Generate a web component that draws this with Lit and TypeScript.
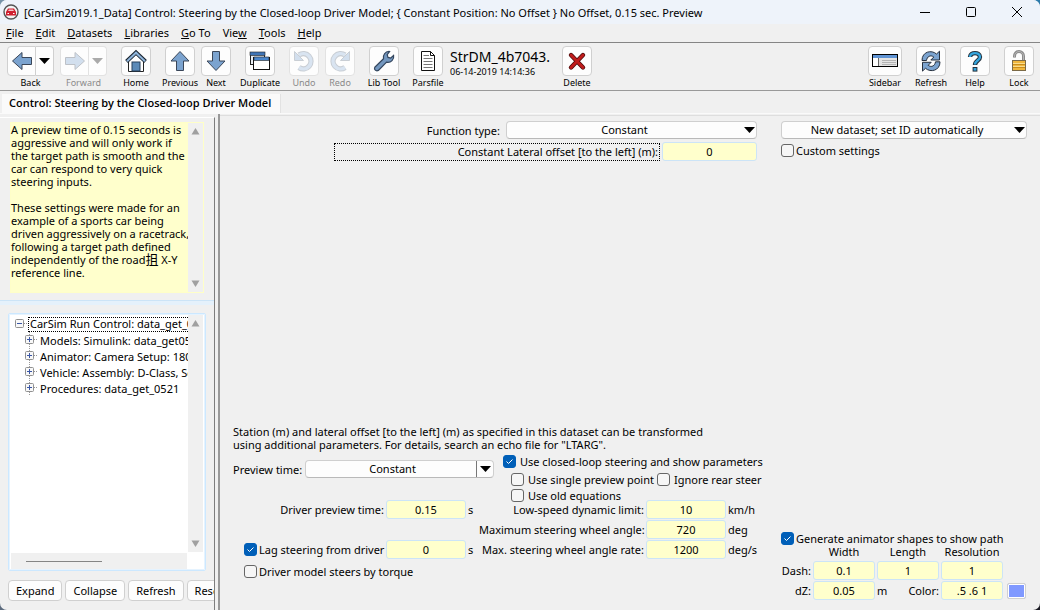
import { LitElement, html, css, svg, nothing } from "lit";
import { customElement, property } from "lit/decorators.js";

const STEEL = "#7ba3cf";
const EDGE = "#3a4658";

const icons: Record<string, unknown> = {
  back: svg`<path d="M2.5 12 L12 3.5 V8.5 H21.5 V15.5 H12 V20.5 Z" fill=${STEEL} stroke=${EDGE}/>`,
  forward: svg`<path d="M21.5 12 L12 3.5 V8.5 H2.5 V15.5 H12 V20.5 Z" fill=${STEEL} stroke=${EDGE}/>`,
  prev: svg`<path d="M12 2.5 L21 12 H15.5 V21.5 H8.5 V12 H3 Z" fill=${STEEL} stroke=${EDGE}/>`,
  next: svg`<path d="M12 21.5 L21 12 H15.5 V2.5 H8.5 V12 H3 Z" fill=${STEEL} stroke=${EDGE}/>`,
  home: svg`<path d="M4.5 12 V22.5 H19.5 V12 L12 5 Z" fill="#fff" stroke="#222"/>
    <rect x="8" y="13" width="8" height="9" fill="#5b8ab8" stroke="#27405c"/>
    <path d="M2.5 12.5 L12 3.5 L21.5 12.5" fill="none" stroke="#1c2733" stroke-width="4"/>
    <path d="M3 12.2 L12 3.7 L21 12.2" fill="none" stroke="#8fb4da" stroke-width="2"/>`,
  dup: svg`<rect x="2.5" y="3.5" width="14" height="12" fill="#e9eef4" stroke="#222"/>
    <rect x="2" y="3" width="15" height="3.5" fill="#3f74b5" stroke="#222" stroke-width=".6"/>
    <rect x="5.5" y="8.5" width="16" height="12" fill="#fff" stroke="#111"/>
    <rect x="6" y="8" width="15" height="3.5" fill="#4a86cc" stroke="#222" stroke-width=".6"/>`,
  undo: svg`<path d="M7 6 A7.6 7.6 0 1 1 7 18.5" fill="none" stroke="#5d6d80" stroke-width="5.4"/>
    <path d="M2.5 2.5 V11.5 H11.5 Z" fill=${STEEL} stroke="#5d6d80"/>
    <path d="M7 6 A7.6 7.6 0 1 1 7 18.5" fill="none" stroke="#8fb2d8" stroke-width="3.4"/>`,
  redo: svg`<path d="M17 6 A7.6 7.6 0 1 0 17 18.5" fill="none" stroke="#5d6d80" stroke-width="5.4"/>
    <path d="M21.5 2.5 V11.5 H12.5 Z" fill=${STEEL} stroke="#5d6d80"/>
    <path d="M17 6 A7.6 7.6 0 1 0 17 18.5" fill="none" stroke="#8fb2d8" stroke-width="3.4"/>`,
  wrench: svg`<path d="M2.8 18.2 L11.5 9.8 C10.7 6 13.2 2.6 17 2.4 L17.6 2.6 L15.2 5.6 L16 8.4 L18.8 9 L21.6 6.4 C22.4 10.4 19 14 14.6 13.2 L6.4 21.4 C4 22.6 1.6 20.6 2.8 18.2 Z" fill="#7397bf" stroke="#34465e" stroke-width="1.2"/>`,
  page: svg`<path d="M5.5 2.5 H14.5 L18.5 6.5 V21.5 H5.5 Z" fill="#fff" stroke="#111"/>
    <path d="M14.5 2.5 V6.5 H18.5" fill="none" stroke="#111"/>
    <path d="M7.5 6.5 H13 M7.5 9.5 H16.5 M7.5 12.5 H16.5 M7.5 15.5 H16.5 M7.5 18.5 H16.5" stroke="#777"/>`,
  del: svg`<path d="M6 6 L18 18.5 M18 6 L6 18.5" stroke="#4d0b0b" stroke-width="4.4" stroke-linecap="round"/>
    <path d="M6 6 L18 18.5 M18 6 L6 18.5" stroke="#c01c1c" stroke-width="2.8" stroke-linecap="round"/>`,
  sidebar: svg`<rect x="0" y="6" width="26" height="12" fill="#e4e4e4"/>
    <rect x="0" y="6" width="26" height="3" fill="#5f93d3"/>
    <rect x="0" y="9" width="6" height="9" fill="#fff"/>
    <path d="M6.5 9 V18" stroke="#666"/><path d="M10 11.5 H24 M10 13.5 H24 M10 15.5 H24" stroke="#b4b4b4"/>
    <rect x=".5" y="5.5" width="25" height="12" fill="none" stroke="#000"/>`,
  refresh: svg`<path d="M3 11.5 C3 2.5 12.5 .5 17.5 5 L20.5 2.2 V11 H11.8 L14.8 8 C11.5 5.5 8 7.5 7.5 11.5 Z" fill=${STEEL} stroke="#27313f"/>
    <path d="M21 12.8 C21 21.8 11.5 23.8 6.5 19.3 L3.5 22.1 V13.3 H12.2 L9.2 16.3 C12.5 18.8 16 16.8 16.5 12.8 Z" fill=${STEEL} stroke="#27313f"/>`,
  help: svg`<path d="M7 8 C7 2.8 17 2.8 17 8 C17 11.5 12 11.5 12 16" fill="none" stroke="#24313d" stroke-width="4.4"/>
    <rect x="9.6" y="18" width="4.8" height="4.6" fill="#24313d"/>
    <path d="M7 8 C7 2.8 17 2.8 17 8 C17 11.5 12 11.5 12 15.5" fill="none" stroke="#35a7e0" stroke-width="2.4"/>
    <rect x="10.6" y="19" width="2.8" height="2.6" fill="#35a7e0"/>`,
  lock: svg`<path d="M7.5 8.5 V7 A4.5 4.5 0 0 1 16.5 7 V12" fill="none" stroke="#8a8a8a" stroke-width="3"/>
    <path d="M7.5 8.5 V7 A4.5 4.5 0 0 1 16.5 7 V12" fill="none" stroke="#b5b5b5" stroke-width="1"/>
    <rect x="5.5" y="11.5" width="13" height="10" fill="#f0b63c" stroke="#7b6a48"/>
    <path d="M6 14.5 H18 M6 17.5 H18" stroke="#f9dc8c"/><path d="M6 15.5 H18 M6 18.5 H18" stroke="#c98d1c"/>`,
};

const icon = (name: string, w = 24) =>
  html`<svg width=${w} height="24" viewBox="0 0 ${w} 24" aria-hidden="true">${icons[name]}</svg>`;

const caret = html`<svg class="caret" width="11" height="6" viewBox="0 0 11 6" aria-hidden="true"><path d="M0 0 H11 L5.5 6 Z" fill="currentColor"/></svg>`;

const controls = css`
  * { box-sizing: border-box; }
  button, input, select { font: inherit; color: inherit; margin: 0; }
  button {
    background: #fdfdfd; border: 1px solid #d0d0d0; border-radius: 4px; padding: 0;
    display: flex; align-items: center; justify-content: center;
  }
  svg { display: block; flex: none; }
`;

@customElement("tool-button")
class ToolButton extends LitElement {
  @property() icon = "";
  @property() label = "";
  @property({ type: Boolean }) off = false;
  @property({ type: Boolean }) menu = false;
  @property({ type: Boolean }) wide = false;
  static styles = [controls, css`
    :host { display: block; }
    .tool { display: flex; flex-direction: column; align-items: center; width: 30px; }
    .tool.menu { width: 47px; }
    .tool.wide { width: 34px; }
    .keys { display: flex; width: 100%; height: 30px; }
    .key { flex: 1; }
    .menu .key { border-radius: 4px 0 0 4px; }
    .more { width: 18px; border-left: 0; border-radius: 0 4px 4px 0; }
    .label { font-size: 9px; line-height: 14px; white-space: nowrap; }
    .off .label { color: #8a8a8a; }
    .off svg { opacity: .32; }
    .off button { border-color: #e2e2e2; }
  `];
  render() {
    return html`<div class="tool ${this.menu ? "menu" : ""} ${this.wide ? "wide" : ""} ${this.off ? "off" : ""}">
      <div class="keys">
        <button class="key" aria-label=${this.label} ?disabled=${this.off}>${icon(this.icon, this.wide ? 26 : 24)}</button>
        ${this.menu ? html`<button class="more" aria-label="${this.label} history" ?disabled=${this.off}>${caret}</button>` : nothing}
      </div>
      <span class="label">${this.label}</span>
    </div>`;
  }
}

@customElement("drop-down")
class DropDown extends LitElement {
  @property() value = "";
  @property() label = "";
  @property({ type: Boolean }) split = false;
  static styles = [controls, css`
    :host { display: block; position: relative; }
    select {
      appearance: none; display: block; width: 100%; height: 18px; padding: 0 17px 0 3px;
      border: 1px solid #cfcfcf; border-bottom-color: #b9b9b9; border-radius: 4px;
      background: #fdfdfd; text-align: center; text-align-last: center; line-height: 16px;
    }
    .arrow {
      position: absolute; inset: 1px 1px 1px auto; width: 13px; pointer-events: none;
      display: flex; align-items: center; justify-content: center;
    }
    .arrow.split { width: 17px; border-left: 1px solid #777; }
  `];
  render() {
    return html`<select aria-label=${this.label}><option>${this.value}</option></select>
      <span class="arrow ${this.split ? "split" : ""}">${caret}</span>`;
  }
}

@customElement("tick-box")
class TickBox extends LitElement {
  @property() label = "";
  @property({ type: Boolean }) on = false;
  @property({ type: Boolean }) near = false;
  static styles = [controls, css`
    :host { display: block; }
    label { display: flex; align-items: center; gap: 4px; height: 16px; white-space: nowrap; }
    label.near { gap: 2px; }
    input {
      appearance: none; width: 13px; height: 13px; flex: none;
      border: 1px solid #666; border-radius: 3px; background: #f6f6f6;
    }
    input:checked {
      border-color: #005fb8;
      background: #005fb8 url('data:image/svg+xml,<svg xmlns="http://www.w3.org/2000/svg" viewBox="0 0 11 11"><path d="M2.5 5.5 L4.5 7.5 L8.5 3.5" fill="none" stroke="white"/></svg>');
    }
  `];
  render() {
    return html`<label class=${this.near ? "near" : ""}><input type="checkbox" .checked=${this.on}>${this.label}</label>`;
  }
}

@customElement("app-root")
class AppRoot extends LitElement {
  static styles = [controls, css`
    :host {
      display: block; height: 100vh; overflow: hidden; color: #000;
      font: 11px/13px "Noto Sans", "Open Sans", "Noto Sans CJK SC", sans-serif;
      background: linear-gradient(to right, #7793a8 50%, #2d7bab 50%) top / 100% 50% no-repeat,
        linear-gradient(to right, #5c6b7e 50%, #1a1a22 50%);
    }
    .window {
      display: flex; flex-direction: column; height: 100%; background: #f0f0f0;
      border-radius: 7px; overflow: hidden;
    }
    .title { display: flex; align-items: center; height: 24px; flex: none; padding-left: 3px; background: #eef3fa; }
    .title h1 { flex: 1; margin: 0 0 0 5px; font-size: 11px; font-weight: 400; white-space: nowrap; }
    .title button { width: 46px; height: 24px; background: none; border: 0; }
    .menus { display: flex; gap: 12px; height: 18px; flex: none; padding-left: 6px; line-height: 17px; }
    .menus a { color: inherit; text-decoration: none; }
    .tools {
      display: flex; gap: 14px; height: 49px; flex: none; padding: 3px 6px 0 7px;
      border-top: 1px solid #858585; border-bottom: 1px solid #999;
    }
    .pair { display: flex; gap: 6px; }
    .file { width: 98px; margin-left: -7px; padding-top: 3px; white-space: nowrap; flex: none; }
    .file strong { display: block; font-size: 14px; font-weight: 400; line-height: 16px; }
    .file small { display: block; font-size: 9px; line-height: 14px; }
    .push { flex: 1; }
    .tabs { display: flex; height: 23px; flex: none; padding: 3px 0 0 2px; border-bottom: 1px solid #fafafa; }
    .tab { padding: 0 9px 0 7px; background: #fafafa; border-right: 1px solid #e2e2e2; font-family: "Open Sans", "Noto Sans", sans-serif; font-weight: 600; line-height: 18px; }
    .body { display: flex; flex: 1; min-height: 0; }

    .side { display: flex; flex-direction: column; width: 215px; flex: none; margin-top: 3px; border-top: 1px solid #fff; border-right: 1px solid #7d7d7d; overflow: hidden; }
    .split { width: 5px; flex: none; border-right: 2px solid #999; }
    .note { display: flex; height: 171px; flex: none; margin: 4px 10px 7px; border: 1px solid #ffffc8; background: #ffffcc; }
    .note-text { flex: 1; min-width: 0; white-space: nowrap; }
    .note-text p { margin: 0 0 13px; }
    .han { font-size: 13px; line-height: 1; }
    .rail { display: flex; flex-direction: column; justify-content: space-between; align-items: center; width: 15px; flex: none; padding: 5px 0; background: #f0f0f0; color: #a0a0a0; }
    .band { height: 5px; flex: none; background: #e5f1fb; border-top: 1px solid #cce4f7; }
    .tree { display: flex; flex-direction: column; flex: 1; margin: 8px 8px 9px; border: 1px solid #cce8ff; outline: 1px solid #e5f3ff; outline-offset: -2px; background: #fff; border-radius: 2px; }
    .tree-main { display: flex; flex: 1; min-height: 0; padding: 1px 2px 1px 1px; }
    .nodes { flex: 1; min-width: 0; margin: 0; padding: 1px 0 0 5px; list-style: none; overflow: hidden; white-space: nowrap; }
    .nodes ul { margin: 0; padding: 0 0 0 10px; list-style: none; }
    .node { display: flex; align-items: center; height: 16px; }
    .root { height: 15px; padding: 0 1px; margin-left: 1px; border: 1px dotted #000; line-height: 12px; }
    .leaf { margin-left: 3px; }
    .tree-foot { height: 16px; flex: none; margin: 0 18px 1px 2px; padding: 8px 0 0 15px; background: #f0f0f0; }
    .thumb { width: 76px; height: 1px; background: #858585; }
    .actions { display: flex; gap: 3px; flex: none; padding: 0 0 9px 8px; }
    .actions button { height: 21px; flex: none; padding: 0 7px; }

    .main { display: flex; flex: 1; min-width: 0; margin-top: 1px; border-top: 1px solid #dedede; padding: 5px 13px 9px 13px; gap: 24px; }
    .left { display: flex; flex-direction: column; flex: 1; min-width: 0; justify-content: space-between; padding-bottom: 22px; }
    .right { display: flex; flex-direction: column; width: 246px; flex: none; justify-content: space-between; padding-bottom: 1px; }
    .line { display: flex; align-items: center; justify-content: flex-end; gap: 6px; white-space: nowrap; }
    .top { display: grid; gap: 3px; }
    .func { width: 251px; }
    .focus { width: 326px; height: 18px; border: 1px dotted #000; text-align: right; line-height: 15px; padding-right: 1px; }
    .line.tight { gap: 2px; }
    input.val {
      width: 80px; height: 19px; padding: 0; border: 1px solid #cce4f7; border-radius: 3px;
      background: #ffffcc; text-align: center; outline: 0;
    }
    input.val.offset { width: 95px; }
    .info { margin: 0; }
    .settings { display: grid; grid-template-columns: 246px 15px 1fr; margin-top: 2px; }
    .preview { grid-column: 1 / 3; display: flex; align-items: center; gap: 3px; height: 18px; margin-top: 7px; white-space: nowrap; }
    .preview drop-down { flex: 1; }
    .checks { padding-left: 9px; height: 46px; display: grid; align-content: start; }
    .sub { display: flex; gap: 3px; margin-left: 8px; }
    .checks .sub:first-of-type { margin-top: 2px; }
    .lags { display: grid; grid-auto-rows: 20px; align-content: start; padding-left: 11px; }
    .limits { grid-column: 2 / 4; display: grid; grid-template-columns: 165px 80px 1fr; column-gap: 2px; grid-auto-rows: 20px; align-content: start; align-items: center; white-space: nowrap; }
    .lag { display: grid; grid-template-columns: 140px 80px 1fr; column-gap: 2px; align-items: center; white-space: nowrap; }
    .r { text-align: right; }
    .torque { padding-top: 4px; }
    .shapes { display: grid; grid-template-columns: 30px 62px 62px 62px 20px; column-gap: 2px; row-gap: 1px; align-items: center; white-space: nowrap; }
    .shapes input.val { width: 62px; }
    .c { text-align: center; }
    .swatch { width: 19px; height: 16px; margin-left: 2px; border-radius: 2px; background: #8099ff; box-shadow: inset 0 0 0 1px #fff; }
    .head { padding-bottom: 2px; line-height: 12px; }
  `];

  private menus = [["", "F", "ile"], ["", "E", "dit"], ["", "D", "atasets"], ["", "L", "ibraries"], ["", "G", "o To"], ["Vie", "w", ""], ["", "T", "ools"], ["", "H", "elp"]];
  private nodes = ["Models: Simulink: data_get0521", "Animator: Camera Setup: 180 deg", "Vehicle: Assembly: D-Class, Sedan", "Procedures: data_get_0521"];

  private arrow(up: boolean) {
    return html`<svg width="9" height="7" viewBox="0 0 9 7" aria-hidden="true"><path d=${up ? "M.5 6.5 L4.5 0 L8.5 6.5 Z" : "M.5 .5 L4.5 7 L8.5 .5 Z"} fill="currentColor"/></svg>`;
  }
  private rail() {
    return html`<div class="rail">${this.arrow(true)}${this.arrow(false)}</div>`;
  }
  private expander(open: boolean) {
    return html`<svg width="12" height="16" viewBox="0 0 12 16" aria-hidden="true">
      ${open ? nothing : svg`<path d="M4.5 0 V16" stroke="#999" stroke-dasharray="1 1"/>`}
      <rect x=".5" y="3.5" width="8" height="8" rx="1" fill="#f8f8f8" stroke="#919191"/>
      <path d="M2 7.5 H7 ${open ? "" : "M4.5 5 V10"}" stroke="#3a56a5"/>
      <path d="M9 7.5 H12" stroke="#999" stroke-dasharray="1 1"/></svg>`;
  }
  private field(id: string, label: string, value: string, unit: string) {
    return html`<label class="r" for=${id}>${label}</label><input class="val" id=${id} .value=${value}><span>${unit}</span>`;
  }

  render() {
    return html`<div class="window">
      <header class="title">
        <svg width="16" height="16" viewBox="0 0 16 16" aria-hidden="true">
          <circle cx="8" cy="8" r="7" fill="#f4f4f4" stroke="#555" stroke-width="1.4"/>
          <path d="M3 8 L5 4.5 H11 L13 8 V11.5 H3 Z" fill="#cf2030"/>
          <path d="M5 7 L6 5.5 H10 L11 7 Z" fill="#f3c6ca"/><path d="M4.5 9.5 H6 M10 9.5 H11.5" stroke="#fff"/>
        </svg>
        <h1>[CarSim2019.1_Data] Control: Steering by the Closed-loop Driver Model; { Constant Position: No Offset } No Offset, 0.15 sec. Preview</h1>
        <button aria-label="Minimize"><svg width="10" height="10"><path d="M0 5.5 H10" stroke="#000"/></svg></button>
        <button aria-label="Maximize"><svg width="10" height="10"><rect x=".5" y=".5" width="9" height="9" rx="1" fill="none" stroke="#000"/></svg></button>
        <button aria-label="Close"><svg width="10" height="10"><path d="M0 0 L10 10 M10 0 L0 10" stroke="#000"/></svg></button>
      </header>
      <nav class="menus">${this.menus.map(([a, k, b]) => html`<a href="#">${a}<u>${k}</u>${b}</a>`)}</nav>
      <div class="tools">
        <div class="pair"><tool-button icon="back" label="Back" menu></tool-button><tool-button icon="forward" label="Forward" menu off></tool-button></div>
        <tool-button icon="home" label="Home"></tool-button>
        <div class="pair"><tool-button icon="prev" label="Previous"></tool-button><tool-button icon="next" label="Next"></tool-button></div>
        <tool-button icon="dup" label="Duplicate"></tool-button>
        <div class="pair"><tool-button icon="undo" label="Undo" off></tool-button><tool-button icon="redo" label="Redo" off></tool-button></div>
        <tool-button icon="wrench" label="Lib Tool"></tool-button>
        <tool-button icon="page" label="Parsfile"></tool-button>
        <div class="file"><strong>StrDM_4b7043.</strong><small>06-14-2019 14:14:36</small></div>
        <tool-button icon="del" label="Delete"></tool-button>
        <span class="push"></span>
        <tool-button icon="sidebar" label="Sidebar" wide></tool-button>
        <tool-button icon="refresh" label="Refresh"></tool-button>
        <tool-button icon="help" label="Help"></tool-button>
        <tool-button icon="lock" label="Lock"></tool-button>
      </div>
      <div class="tabs"><div class="tab">Control: Steering by the Closed-loop Driver Model</div></div>
      <div class="body">
        <aside class="side">
          <div class="note">
            <div class="note-text">
              <p>A preview time of 0.15 seconds is<br>aggressive and will only work if<br>the target path is smooth and the<br>car can respond to very quick<br>steering inputs.</p>
              <p>These settings were made for an<br>example of a sports car being<br>driven aggressively on a racetrack,<br>following a target path defined<br>independently of the road<span class="han">抯</span> X-Y<br>reference line.</p>
            </div>
            ${this.rail()}
          </div>
          <div class="band"></div>
          <div class="tree">
            <div class="tree-main">
              <ul class="nodes">
                <li><div class="node">${this.expander(true)}<span class="root">CarSim Run Control: data_get_0521</span></div>
                  <ul>${this.nodes.map((n) => html`<li class="node">${this.expander(false)}<span class="leaf">${n}</span></li>`)}</ul>
                </li>
              </ul>
              ${this.rail()}
            </div>
            <div class="tree-foot"><div class="thumb"></div></div>
          </div>
          <div class="actions"><button>Expand</button><button>Collapse</button><button>Refresh</button><button>Reset</button></div>
        </aside>
        <div class="split"></div>
        <main class="main">
          <section class="left">
            <div class="top">
              <div class="line"><span>Function type:</span><drop-down class="func" label="Function type" value="Constant"></drop-down></div>
              <div class="line tight"><label class="focus" for="offset">Constant Lateral offset [to the left] (m):</label><input class="val offset" id="offset" .value=${"0"}></div>
            </div>
            <div>
              <p class="info">Station (m) and lateral offset [to the left] (m) as specified in this dataset can be transformed<br>using additional parameters. For details, search an echo file for "LTARG".</p>
              <div class="settings">
                <div class="preview"><span>Preview time:</span><drop-down label="Preview time" value="Constant" split></drop-down></div>
                <div class="checks">
                  <tick-box label="Use closed-loop steering and show parameters" on></tick-box>
                  <div class="sub"><tick-box label="Use single preview point"></tick-box><tick-box label="Ignore rear steer"></tick-box></div>
                  <div class="sub"><tick-box label="Use old equations"></tick-box></div>
                </div>
                <div class="lags">
                  <div class="lag">${this.field("preview", "Driver preview time:", "0.15", "s")}</div>
                  <div></div>
                  <div class="lag"><tick-box label="Lag steering from driver" on near></tick-box><input class="val" aria-label="Lag" .value=${"0"}><span>s</span></div>
                  <tick-box class="torque" label="Driver model steers by torque" near></tick-box>
                </div>
                <div class="limits">
                  ${this.field("low", "Low-speed dynamic limit:", "10", "km/h")}
                  ${this.field("angle", "Maximum steering wheel angle:", "720", "deg")}
                  ${this.field("rate", "Max. steering wheel angle rate:", "1200", "deg/s")}
                </div>
              </div>
            </div>
          </section>
          <section class="right">
            <div class="top">
              <drop-down label="Dataset" value="New dataset; set ID automatically"></drop-down>
              <tick-box label="Custom settings" near></tick-box>
            </div>
            <div>
              <tick-box label="Generate animator shapes to show path" on near></tick-box>
              <div class="shapes">
                <span></span><span class="c head">Width</span><span class="c head">Length</span><span class="c head">Resolution</span><span></span>
                <label class="r" for="dash">Dash:</label><input class="val" id="dash" .value=${"0.1"}><input class="val" aria-label="Length" .value=${"1"}><input class="val" aria-label="Resolution" .value=${"1"}><span></span>
                <label class="r" for="dz">dZ:</label><input class="val" id="dz" .value=${"0.05"}>
                <div class="line"><span>m</span><span class="push"></span><label for="color">Color:</label></div>
                <input class="val" id="color" .value=${".5 .6 1"}><button class="swatch" aria-label="Pick color"></button>
              </div>
            </div>
          </section>
        </main>
      </div>
    </div>`;
  }
}
